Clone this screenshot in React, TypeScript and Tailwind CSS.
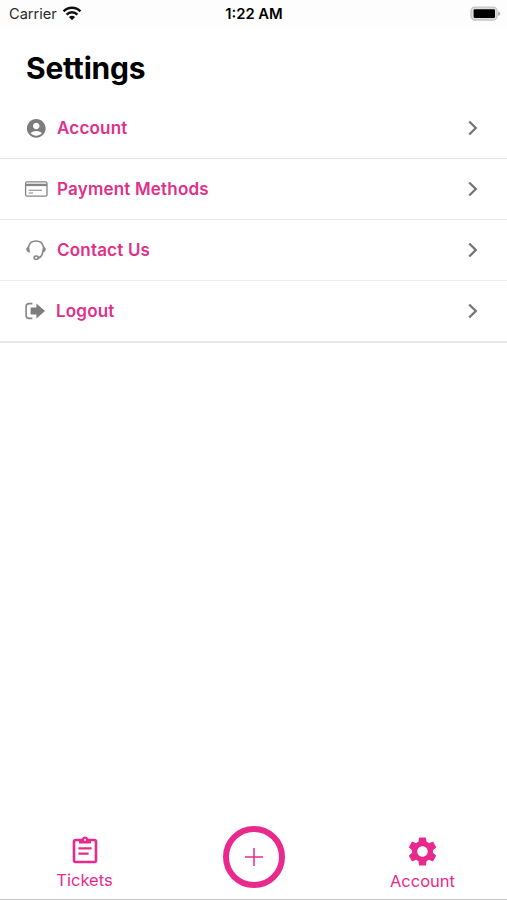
import React from "react";
import { MdAccountCircle, MdSettings } from "react-icons/md";

function WifiIcon() {
  return (
    <svg width="20" height="16" viewBox="0 0 20 16" fill="none" stroke="#111" strokeWidth="2.5">
      <path d="M1.6 5.3a11.8 11.8 0 0 1 16.8 0" />
      <path d="M4.6 8.6a7.6 7.6 0 0 1 10.8 0" />
      <path d="M10 14.2 6.9 11.1a4.5 4.5 0 0 1 6.2 0Z" fill="#111" stroke="none" />
    </svg>
  );
}

function BatteryIcon() {
  return (
    <svg width="32" height="16" viewBox="0 0 32 16">
      <rect x="1" y="1.2" width="26" height="12.8" rx="3.8" fill="#dedede" stroke="#c4c4c4" strokeWidth="1.3" />
      <rect x="3.6" y="3.2" width="21.4" height="8.8" rx="1.2" fill="#000" />
      <path d="M28.2 5.4c2.6.8 2.6 3.6 0 4.4Z" fill="#aaa" />
    </svg>
  );
}

function CardIcon() {
  return (
    <svg width="24" height="18" viewBox="0 0 24 18" fill="none" stroke="#858585">
      <rect x="1.6" y="1.9" width="21.4" height="14.3" rx="1.4" strokeWidth="1.3" />
      <path d="M1.8 4.9h21" strokeWidth="2.4" />
      <path d="M4.6 10.2h13.4M4.6 13h4.4" strokeWidth="1.1" />
    </svg>
  );
}

function HeadsetIcon() {
  return (
    <svg width="22" height="22" viewBox="0 0 22 22" fill="none" stroke="#858585" strokeWidth="1.5">
      <path d="M3.6 8C4.4 4.2 7.1 2.1 11 2.1S17.6 4.2 18.4 8" />
      <path d="M3.7 7.6 4.9 13.2C2.8 13.2 1.7 12.2 1.5 10.6S2.6 7.7 3.7 7.6Z" fill="#858585" strokeWidth=".5" />
      <path d="M18.3 7.6 17.1 13.2c2.1 0 3.2-1 3.4-2.6s-1.1-2.9-2.2-3Z" fill="#858585" strokeWidth=".5" />
      <path d="M17.9 12.7c-.7 3.9-2.3 6.1-5 6.4" />
      <ellipse cx="11.2" cy="18.7" rx="2.1" ry="1.6" />
    </svg>
  );
}

function LogoutIcon() {
  return (
    <svg width="22" height="20" viewBox="0 0 22 20">
      <path d="M8.4 2.6H5C3.1 2.6 2.1 3.6 2.1 5.5v9c0 1.9 1 2.9 2.9 2.9h3.4" fill="none" stroke="#858585" strokeWidth="1.6" />
      <path d="M6.6 6.4h5.8V2.6L21 10l-8.6 7.4v-3.8H6.6Z" fill="#7d7d7d" />
    </svg>
  );
}

function Chevron() {
  return (
    <svg width="12" height="18" viewBox="0 0 12 18" fill="none" stroke="#747474" strokeWidth="2.3">
      <path d="m2.2 2.5 6.6 6.5-6.6 6.5" />
    </svg>
  );
}

function TicketsIcon() {
  return (
    <svg width="26" height="28" viewBox="0 0 26 28" fill="none" stroke="#e92a8c">
      <rect x="2" y="4" width="22" height="22" rx="1.8" strokeWidth="2.6" />
      <path d="M7 3h2.8a3.3 3.3 0 0 1 6.4 0H19v4.6H7Z" fill="#e92a8c" stroke="none" />
      <circle cx="13" cy="3.8" r="1.1" fill="#fff" stroke="none" />
      <path d="M6.4 12.4h13.2M6.4 17.6h10.2" strokeWidth="2.2" />
    </svg>
  );
}

const rows = [
  { label: "Account", icon: <MdAccountCircle size={22.5} color="#7d7d7d" />, line: "h-[61px] border-b border-[#e6e6e6]", gap: "ml-0" },
  { label: "Payment Methods", icon: <CardIcon />, line: "h-[61px] border-b border-[#e6e6e6]", gap: "ml-0" },
  { label: "Contact Us", icon: <HeadsetIcon />, line: "h-[61px] border-b border-[#ececec]", gap: "ml-0" },
  { label: "Logout", icon: <LogoutIcon />, line: "h-[62px] border-b-2 border-[#e8e8e8]", gap: "-ml-px" },
];

export default function App() {
  return (
    <div className="flex h-[900px] w-[507px] flex-col overflow-hidden border-b border-[#c4c4c4] bg-white font-['Inter',sans-serif] text-black">
      <header className="grid h-[27px] shrink-0 grid-cols-3 items-center bg-[#fdfdfd] pl-[9px] pr-[5px] text-[15px] leading-none">
        <div className="flex items-center gap-[5px]">
          <span className="pt-px text-[14.6px] text-[#2a2a2a]">Carrier</span>
          <WifiIcon />
        </div>
        <span className="pr-[3px] pt-px text-center text-[14.8px] font-semibold">1:22 AM</span>
        <div className="flex justify-end">
          <BatteryIcon />
        </div>
      </header>
      <h1 className="flex h-[71px] shrink-0 items-center pl-[26px] pt-[11px] text-[30px] font-bold leading-none tracking-[-0.2px]">
        Settings
      </h1>
      <main className="flex-1">
        {rows.map((row) => (
          <div key={row.label} className={`flex items-center pl-6 pr-[28px] ${row.line}`}>
            <span className={`flex w-6 justify-center ${row.gap}`}>{row.icon}</span>
            <span className="ml-[9px] flex-1 text-[17px] font-semibold leading-none tracking-[0.2px] text-[#e0308a]">{row.label}</span>
            <Chevron />
          </div>
        ))}
      </main>
      <nav className="grid h-[84px] shrink-0 grid-cols-3 text-[#e92a8c]">
        <div className="flex flex-col items-center pt-[21px]">
          <TicketsIcon />
          <span className="mt-2 text-[16.5px] leading-none">Tickets</span>
        </div>
        <div className="flex justify-center pt-[11px]">
          <div className="flex size-[62px] items-center justify-center rounded-full border-[6px] border-[#e92a8c]">
            <svg width="20" height="20" viewBox="0 0 20 20" stroke="#e92a8c" strokeWidth="1.5">
              <path d="M1 10h18M10 1v18" />
            </svg>
          </div>
        </div>
        <div className="flex flex-col items-center pt-[19px]">
          <MdSettings size={35} />
          <span className="mt-1 text-[16.5px] leading-none">Account</span>
        </div>
      </nav>
    </div>
  );
}
